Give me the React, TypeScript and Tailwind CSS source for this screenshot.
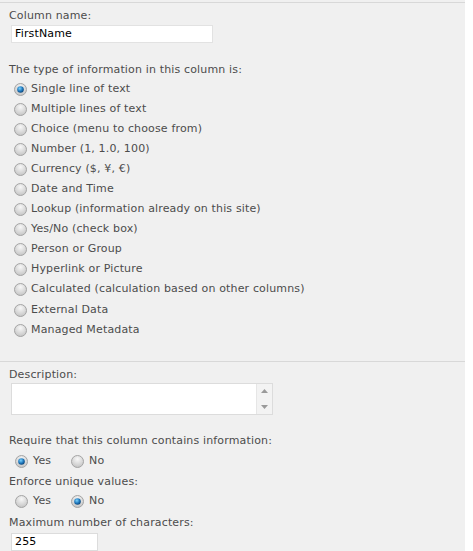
import React from "react";

const Radio = ({ checked = false }: { checked?: boolean }) => (
  <svg width="13" height="13" viewBox="0 0 13 13" className="shrink-0">
    <defs>
      <radialGradient id="rbg" cx="50%" cy="30%" r="70%">
        <stop offset="0%" stopColor="#f8f8f8" />
        <stop offset="100%" stopColor="#c4c4c4" />
      </radialGradient>
      <radialGradient id="rdot" cx="40%" cy="35%" r="70%">
        <stop offset="0%" stopColor="#7ad3ff" />
        <stop offset="60%" stopColor="#1c73b8" />
        <stop offset="100%" stopColor="#0d3f6e" />
      </radialGradient>
    </defs>
    <circle cx="6.5" cy="6.5" r="6" fill="url(#rbg)" stroke="#a4a4a4" strokeWidth="1" />
    {checked && <circle cx="6.5" cy="6.5" r="3.3" fill="url(#rdot)" />}
  </svg>
);

const types = [
  "Single line of text",
  "Multiple lines of text",
  "Choice (menu to choose from)",
  "Number (1, 1.0, 100)",
  "Currency ($, ¥, €)",
  "Date and Time",
  "Lookup (information already on this site)",
  "Yes/No (check box)",
  "Person or Group",
  "Hyperlink or Picture",
  "Calculated (calculation based on other columns)",
  "External Data",
  "Managed Metadata",
];

const YesNo = ({ yes }: { yes: boolean }) => (
  <div className="flex items-center h-[20px] pl-[6px]">
    <Radio checked={yes} />
    <span className="ml-[5px] w-[38px]">Yes</span>
    <Radio checked={!yes} />
    <span className="ml-[5px]">No</span>
  </div>
);

export default function App() {
  return (
    <div className="bg-white min-h-[551px]">
      <div
        className="w-[465px] bg-[#f0f0f0] text-[#4c4c4c] text-[11px] leading-[14px] tracking-[0.15px] pt-[2px] overflow-hidden h-[551px]"
        style={{ fontFamily: '"DejaVu Sans", Verdana, sans-serif' }}
      >
        <div className="border-t border-[#d8d8d8] pl-[9px] pt-[6px] pb-[21px]">
          <div>Column name:</div>
          <div className="mt-[2px] ml-[2px] w-[202px] h-[18px] bg-white border border-[#e2e2e2] flex items-center pl-[3px] text-black">
            FirstName
          </div>
          <div className="mt-[20px]">The type of information in this column is:</div>
          <div className="mt-[2px] pl-[5px]">
            {types.map((t, i) => (
              <div key={t} className={`flex items-center h-[20px] ${i === 11 ? "mt-[1px]" : ""}`}>
                <Radio checked={i === 0} />
                <span className="ml-[4px]">{t}</span>
              </div>
            ))}
          </div>
        </div>
        <div className="border-t border-[#d8d8d8] pl-[9px] pt-[6px]">
          <div>Description:</div>
          <div className="mt-[1px] ml-[2px] w-[262px] h-[32px] bg-white border border-[#dcdcdc] flex justify-end">
            <div className="w-[16px] h-full bg-[#f3f3f3] border-l border-[#e6e6e6] flex flex-col items-center justify-between py-[5px]">
              <svg width="7" height="4" viewBox="0 0 7 4">
                <path d="M0 4 L3.5 0 L7 4 Z" fill="#9a9a9a" />
              </svg>
              <svg width="7" height="4" viewBox="0 0 7 4">
                <path d="M0 0 L3.5 4 L7 0 Z" fill="#9a9a9a" />
              </svg>
            </div>
          </div>
          <div className="mt-[19px]">Require that this column contains information:</div>
          <div className="mt-[3px]">
            <YesNo yes={true} />
          </div>
          <div className="mt-[4px]">Enforce unique values:</div>
          <div className="mt-[2px]">
            <YesNo yes={false} />
          </div>
          <div className="mt-[5px]">Maximum number of characters:</div>
          <div className="mt-[3px] ml-[2px] w-[87px] h-[18px] bg-white border border-[#dcdcdc] flex items-center pl-[3px] text-black">
            255
          </div>
        </div>
      </div>
    </div>
  );
}
